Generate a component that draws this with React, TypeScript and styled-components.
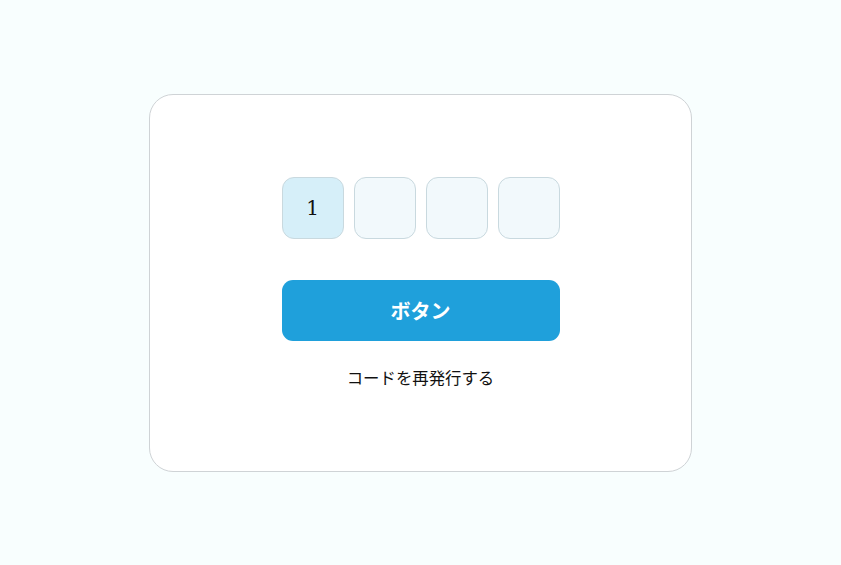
import React from "react";
import styled, { createGlobalStyle } from "styled-components";

const Global = createGlobalStyle`
  html, body { margin: 0; padding: 0; }
  body {
    background: #f8fefe;
    font-family: "Noto Sans CJK JP", "Noto Sans", sans-serif;
  }
`;

const Page = styled.div`
  width: 841px;
  height: 565px;
  display: flex;
  align-items: flex-start;
  justify-content: center;
  padding-top: 94px;
  box-sizing: border-box;
`;

const Card = styled.div`
  width: 543px;
  height: 378px;
  box-sizing: border-box;
  background: #ffffff;
  border: 1px solid #cfd3d6;
  border-radius: 24px;
  display: flex;
  flex-direction: column;
  align-items: center;
  padding-top: 82px;
`;

const CodeRow = styled.div`
  display: flex;
  gap: 10px;
`;

const CodeBox = styled.input<{ $active?: boolean }>`
  width: 62px;
  height: 62px;
  box-sizing: border-box;
  border: 1px solid #c9d9df;
  border-radius: 12px;
  background: ${(p) => (p.$active ? "#d6eff9" : "#f2f9fc")};
  text-align: center;
  font-family: "DejaVu Serif", serif;
  font-size: 20px;
  color: #111;
  outline: none;
  padding: 0;
`;

const Button = styled.button`
  margin-top: 41px;
  width: 278px;
  height: 61px;
  border: none;
  border-radius: 11px;
  background: #1fa0db;
  color: #ffffff;
  font-family: "Noto Sans CJK JP", sans-serif;
  font-weight: 700;
  font-size: 20px;
  cursor: pointer;
`;

const Resend = styled.a`
  margin-top: 24px;
  font-family: "Noto Sans CJK JP", sans-serif;
  font-size: 16.4px;
  line-height: 24px;
  color: #111;
  text-decoration: none;
  cursor: pointer;
`;

export default function App() {
  return (
    <>
      <Global />
      <Page>
        <Card>
          <CodeRow>
            <CodeBox $active defaultValue="1" maxLength={1} />
            <CodeBox defaultValue="" maxLength={1} />
            <CodeBox defaultValue="" maxLength={1} />
            <CodeBox defaultValue="" maxLength={1} />
          </CodeRow>
          <Button>ボタン</Button>
          <Resend>コードを再発行する</Resend>
        </Card>
      </Page>
    </>
  );
}
